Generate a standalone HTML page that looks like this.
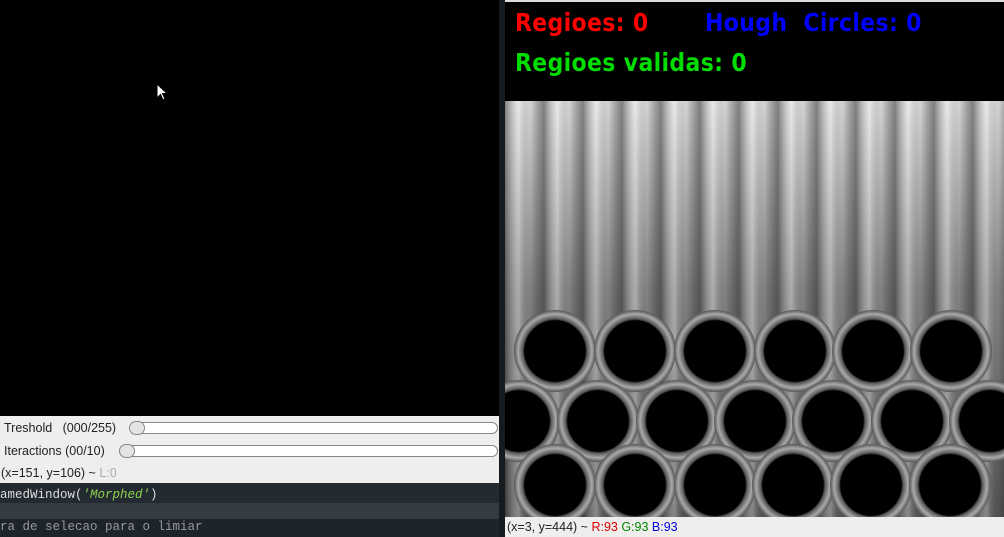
<!DOCTYPE html>
<html><head><style>
*{margin:0;padding:0;box-sizing:border-box}
body{width:1004px;height:537px;background:#1e242b;position:relative;overflow:hidden;font-family:"Liberation Sans",sans-serif}
.a{position:absolute}
.ocv{font-family:"DejaVu Sans","Liberation Sans",sans-serif;font-weight:bold;font-size:25px;letter-spacing:0.4px;transform:scaleX(0.88);transform-origin:0 0;white-space:nowrap}
.sl{position:absolute;height:12px;border:1px solid #888;border-radius:6px;background:#fff}
.kn{position:absolute;width:16px;height:14px;border:1px solid #888;border-radius:7px;background:#e4e4e4}
.lab{position:absolute;font-size:12.5px;color:#222}
</style></head><body>
<div class="a" style="left:0;top:0;width:499px;height:416px;background:#000"></div>
<svg class="a" style="left:156px;top:83px" width="12" height="18"><path d="M1 1 L1 15 L4.5 11.5 L7 17 L9 16 L6.5 10.5 L11 10.5 Z" fill="#fff" stroke="#000" stroke-width="1"/></svg>
<div class="a" style="left:0;top:416px;width:499px;height:67px;background:#efeeec"></div>
<div class="lab" style="left:4px;top:421px">Treshold &nbsp; (000/255)</div>
<div class="sl" style="left:130px;top:422px;width:368px"></div>
<div class="kn" style="left:129px;top:421px"></div>
<div class="lab" style="left:4px;top:444px">Iteractions (00/10)</div>
<div class="sl" style="left:120px;top:445px;width:378px"></div>
<div class="kn" style="left:119px;top:444px"></div>
<div class="lab" style="left:1px;top:466px">(x=151, y=106) ~ <span style="color:#aaa">L:0</span></div>
<div class="a" style="left:0;top:483px;width:499px;height:20px;background:#232a31"></div>
<div class="a" style="left:0;top:503px;width:499px;height:16px;background:#343b43"></div>
<div class="a" style="left:0;top:488px;font-family:'Liberation Mono',monospace;font-size:12.5px;color:#ddd">amedWindow(<i style="color:#8fd14f">'Morphed'</i>)</div>
<div class="a" style="left:0;top:520px;font-family:'Liberation Mono',monospace;font-size:12.5px;color:#999">ra de selecao para o limiar</div>
<div class="a" style="left:499px;top:0;width:6px;height:537px;background:#161b20"></div>
<div class="a" style="left:505px;top:0;width:499px;height:101px;background:#000;border-top:2px solid #ddd"></div>
<div class="a ocv" style="left:515px;top:8px;color:#f00">Regioes: 0</div>
<div class="a ocv" style="left:705px;top:8px;color:#00f">Hough &nbsp;Circles: 0</div>
<div class="a ocv" style="left:515px;top:48px;color:#0d0">Regioes validas: 0</div>
<svg class="a" style="left:505px;top:101px" width="499" height="416">
<defs>
<linearGradient id="bg" x1="0" y1="0" x2="0" y2="1"><stop offset="0" stop-color="#e0e0e0"/><stop offset="0.45" stop-color="#8a8a8a"/><stop offset="1" stop-color="#555"/></linearGradient>
<pattern id="st" width="39" height="416" patternUnits="userSpaceOnUse"><rect width="39" height="416" fill="url(#g2)"/></pattern>
<linearGradient id="g2" x1="0" x2="1"><stop offset="0" stop-color="#222" stop-opacity=".5"/><stop offset=".35" stop-color="#fff" stop-opacity=".3"/><stop offset=".65" stop-color="#000" stop-opacity=".05"/><stop offset="1" stop-color="#222" stop-opacity=".5"/></linearGradient>
<radialGradient id="ring"><stop offset=".74" stop-color="#000"/><stop offset=".78" stop-color="#555"/><stop offset=".9" stop-color="#aaa"/><stop offset="1" stop-color="#555"/></radialGradient>
</defs>
<rect width="499" height="416" fill="url(#bg)"/>
<rect width="499" height="416" fill="url(#st)"/>
<g fill="url(#ring)">
<circle cx="50" cy="250" r="41"/><circle cx="130" cy="250" r="41"/><circle cx="210" cy="250" r="41"/><circle cx="290" cy="250" r="41"/><circle cx="368" cy="250" r="41"/><circle cx="446" cy="250" r="41"/>
<circle cx="14" cy="320" r="41"/><circle cx="93" cy="320" r="41"/><circle cx="172" cy="320" r="41"/><circle cx="250" cy="320" r="41"/><circle cx="328" cy="320" r="41"/><circle cx="407" cy="320" r="41"/><circle cx="485" cy="320" r="41"/>
<circle cx="50" cy="384" r="41"/><circle cx="130" cy="384" r="41"/><circle cx="210" cy="384" r="41"/><circle cx="288" cy="384" r="41"/><circle cx="366" cy="384" r="41"/><circle cx="445" cy="384" r="41"/>
</g>
</svg>
<div class="a" style="left:505px;top:517px;width:499px;height:20px;background:#efeeec;font-size:12.5px;color:#222;padding:3px 0 0 2px">(x=3, y=444) ~ <span style="color:#d00">R:93</span> <span style="color:#080">G:93</span> <span style="color:#00d">B:93</span></div>
</body></html>
